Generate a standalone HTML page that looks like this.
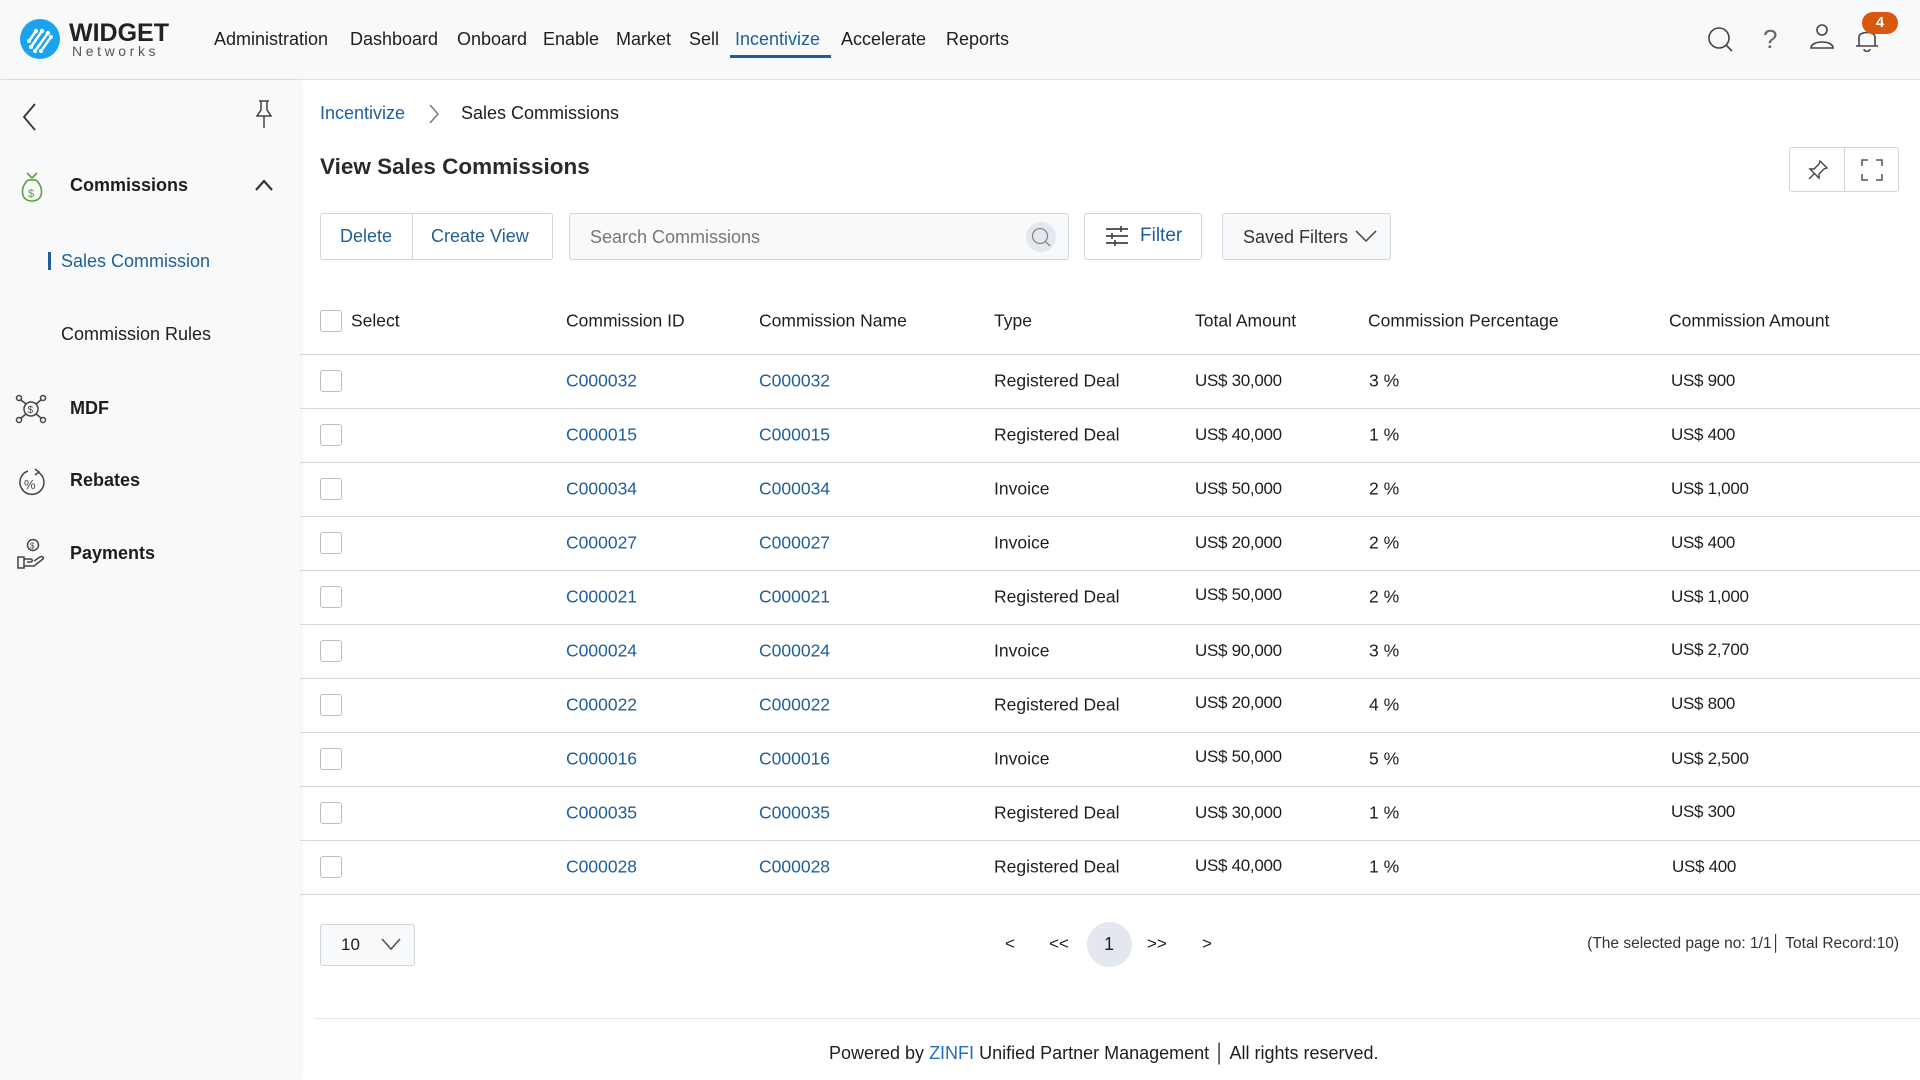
<!DOCTYPE html>
<html><head><meta charset="utf-8"><style>
*{margin:0;padding:0;box-sizing:border-box}
body{width:1920px;height:1080px;overflow:hidden;background:#fff;font-family:"Liberation Sans",sans-serif;color:#1e1e1e;position:relative}
.a{position:absolute;white-space:nowrap}
.hdr{position:absolute;left:0;top:0;width:1920px;height:80px;background:#f8f9fa;border-bottom:1px solid #dde3ea}
.nav{font-size:18px;top:29px;color:#1e1e1e}
.side{position:absolute;left:0;top:80px;width:300px;height:1000px;background:#f8f9fa;box-shadow:2px 0 4px rgba(0,0,0,.05)}
.link{color:#1f5f99}
.t{font-size:17.5px;transform:translateY(-50%)}
.line{position:absolute;left:300px;width:1620px;height:1px;background:#d3d9e2}
.cb{position:absolute;left:320px;width:22px;height:22px;border:1px solid #b8bec6;border-radius:3px;background:#fff;transform:translateY(-50%)}
.btn{position:absolute;border:1px solid #cfd6de;background:#fff;border-radius:3px}
.amt{letter-spacing:-0.3px;font-size:17px}
</style></head><body>
<div class="hdr"></div>
<svg class="a" style="left:20px;top:19px" width="40" height="40" viewBox="0 0 40 40"><circle cx="20" cy="20" r="20" fill="#1aa3ef"/><g stroke="#fff" stroke-width="2.5" stroke-linecap="round" fill="none"><path d="M9 22 L16 12 M11 28 L22 12 M15 32 L28 14 M21 32 L31 18"/></g><g fill="#fff"><circle cx="16" cy="12" r="2.2"/><circle cx="22" cy="12" r="2.2"/><circle cx="28" cy="14" r="2.2"/><circle cx="31" cy="18" r="2"/><circle cx="9" cy="22" r="2"/><circle cx="11" cy="28" r="2"/><circle cx="15" cy="32" r="2"/><circle cx="21" cy="32" r="2"/></g></svg>
<div class="a" style="left:69px;top:19px;font-size:25px;font-weight:bold;color:#222;letter-spacing:0px">WIDGET</div>
<div class="a" style="left:72px;top:43px;font-size:14px;color:#555;letter-spacing:3.6px">Networks</div>
<div class="a nav" style="left:214px">Administration</div>
<div class="a nav" style="left:350px">Dashboard</div>
<div class="a nav" style="left:457px">Onboard</div>
<div class="a nav" style="left:543px">Enable</div>
<div class="a nav" style="left:616px">Market</div>
<div class="a nav" style="left:689px">Sell</div>
<div class="a nav" style="left:735px;color:#1f5f99">Incentivize</div>
<div class="a" style="left:730px;top:55px;width:101px;height:3px;background:#1f5f99"></div>
<div class="a nav" style="left:841px">Accelerate</div>
<div class="a nav" style="left:946px">Reports</div>
<svg class="a" style="left:1707px;top:26px" width="28" height="28" viewBox="0 0 28 28" fill="none" stroke="#444" stroke-width="1.6"><circle cx="12" cy="12" r="10"/><path d="M19 19 L25 25"/></svg>
<div class="a" style="left:1763px;top:24px;font-size:26px;color:#666">?</div>
<svg class="a" style="left:1808px;top:22px" width="28" height="28" viewBox="0 0 28 28" fill="none" stroke="#444" stroke-width="1.6"><circle cx="14" cy="8" r="5"/><path d="M3 26 C3 18 25 18 25 26 Z"/></svg>
<svg class="a" style="left:1853px;top:24px" width="28" height="30" viewBox="0 0 28 30" fill="none" stroke="#444" stroke-width="1.6"><path d="M6 22 L6 13 C6 7 22 7 22 13 L22 22 Z M3 22 L25 22 M11 25 C11 28 17 28 17 25"/></svg>
<div class="a" style="left:1862px;top:12px;width:36px;height:22px;border-radius:11px;background:#d9580d;color:#fff;font-size:15px;font-weight:bold;text-align:center;line-height:22px">4</div>
<div class="side"></div>
<svg class="a" style="left:20px;top:102px" width="20" height="30" viewBox="0 0 20 30" fill="none" stroke="#333" stroke-width="1.8"><path d="M15 2 L4 15 L15 28"/></svg>
<svg class="a" style="left:254px;top:98px" width="20" height="32" viewBox="0 0 20 32" fill="none" stroke="#444" stroke-width="1.5"><path d="M5 3 H15 M7 3 V12 L3 18 H17 L13 12 V3 M10 18 V30"/></svg>
<svg class="a" style="left:18px;top:171px" width="28" height="32" viewBox="0 0 28 32" fill="none" stroke="#5aa13a" stroke-width="1.6"><path d="M9 2 L14 7 L19 2 M10 9 H18 M10 9 C2 16 2 30 14 30 C26 30 26 16 18 9"/><text x="10" y="26" font-size="11" fill="#5aa13a" stroke="none" font-family="Liberation Sans">$</text></svg>
<div class="a" style="left:70px;top:175px;font-size:18px;font-weight:bold;color:#1e1e1e">Commissions</div>
<svg class="a" style="left:254px;top:178px" width="20" height="14" viewBox="0 0 20 14" fill="none" stroke="#333" stroke-width="2.2"><path d="M2 12 L10 3 L18 12"/></svg>
<div class="a" style="left:48px;top:252px;width:3px;height:18px;background:#1f5f99"></div>
<div class="a" style="left:61px;top:251px;font-size:18px;color:#1f5f99">Sales Commission</div>
<div class="a" style="left:61px;top:324px;font-size:18px">Commission Rules</div>
<svg class="a" style="left:15px;top:394px" width="32" height="30" viewBox="0 0 32 30" fill="none" stroke="#444" stroke-width="1.5"><circle cx="16" cy="15" r="7"/><circle cx="4" cy="4" r="2.5"/><circle cx="28" cy="4" r="2.5"/><circle cx="4" cy="26" r="2.5"/><circle cx="28" cy="26" r="2.5"/><path d="M6 6 L11 10 M26 6 L21 10 M6 24 L11 20 M26 24 L21 20"/><text x="12.5" y="19" font-size="10" fill="#444" stroke="none">$</text></svg>
<div class="a" style="left:70px;top:398px;font-size:18px;font-weight:bold">MDF</div>
<svg class="a" style="left:16px;top:466px" width="30" height="32" viewBox="0 0 30 32" fill="none" stroke="#444" stroke-width="1.5"><path d="M22 6 A12 12 0 1 1 12 5 M19 3 L23 6 L19 9"/><text x="8" y="23" font-size="13" fill="#444" stroke="none">%</text></svg>
<div class="a" style="left:70px;top:470px;font-size:18px;font-weight:bold">Rebates</div>
<svg class="a" style="left:16px;top:538px" width="30" height="32" viewBox="0 0 30 32" fill="none" stroke="#444" stroke-width="1.5"><circle cx="17" cy="7" r="5.5"/><path d="M2 19 H8 V30 H2 Z M8 21 H14 C17 21 17 24 14 24 H11 M8 28 H18 L27 21 C28 19 26 18 24 19 L18 23"/><text x="14" y="10.5" font-size="8" fill="#444" stroke="none">$</text></svg>
<div class="a" style="left:70px;top:543px;font-size:18px;font-weight:bold">Payments</div>
<div class="a link" style="left:320px;top:103px;font-size:18px">Incentivize</div>
<svg class="a" style="left:428px;top:104px" width="12" height="20" viewBox="0 0 12 20" fill="none" stroke="#777" stroke-width="1.4"><path d="M2 1 L10 10 L2 19"/></svg>
<div class="a" style="left:461px;top:103px;font-size:18px">Sales Commissions</div>
<div class="a" style="left:320px;top:154px;font-size:22.5px;font-weight:bold;color:#2a2a2a">View Sales Commissions</div>
<div class="btn" style="left:1789px;top:147px;width:110px;height:45px"></div>
<div class="a" style="left:1844px;top:148px;width:1px;height:43px;background:#cfd6de"></div>
<svg class="a" style="left:1806px;top:158px" width="24" height="24" viewBox="0 0 24 24" fill="none" stroke="#444" stroke-width="1.4"><path d="M14 3 L21 10 L18 11 L13 16 L13 20 L4 11 L8 11 L13 6 Z M8 16 L3 21"/></svg>
<svg class="a" style="left:1861px;top:159px" width="22" height="22" viewBox="0 0 22 22" fill="none" stroke="#555" stroke-width="1.5"><path d="M1 7 V1 H7 M15 1 H21 V7 M21 15 V21 H15 M7 21 H1 V15"/></svg>
<div class="btn" style="left:320px;top:213px;width:233px;height:47px"></div>
<div class="a" style="left:412px;top:214px;width:1px;height:45px;background:#cfd6de"></div>
<div class="a link" style="left:340px;top:226px;font-size:18px">Delete</div>
<div class="a link" style="left:431px;top:226px;font-size:18px">Create View</div>
<div class="btn" style="left:569px;top:213px;width:500px;height:47px;background:#f8f9fa"></div>
<div class="a" style="left:590px;top:227px;font-size:18px;color:#777">Search Commissions</div>
<div class="a" style="left:1026px;top:222px;width:30px;height:30px;border-radius:50%;background:#e3e8ee"></div>
<svg class="a" style="left:1030px;top:226px" width="22" height="22" viewBox="0 0 22 22" fill="none" stroke="#888" stroke-width="1.3"><circle cx="10" cy="10" r="7.5"/><path d="M15.5 15.5 L20 20"/></svg>
<div class="btn" style="left:1084px;top:213px;width:118px;height:47px"></div>
<svg class="a" style="left:1105px;top:225px" width="24" height="22" viewBox="0 0 24 22" fill="none" stroke="#444" stroke-width="1.7"><path d="M1 4 H23 M1 11 H23 M1 18 H23 M16 1 V7 M7 8 V14 M10 15 V21"/></svg>
<div class="a link" style="left:1140px;top:225px;font-size:19px">Filter</div>
<div class="btn" style="left:1222px;top:213px;width:169px;height:47px;background:#f8f9fa"></div>
<div class="a" style="left:1243px;top:227px;font-size:18px;color:#333">Saved Filters</div>
<svg class="a" style="left:1355px;top:229px" width="22" height="14" viewBox="0 0 22 14" fill="none" stroke="#555" stroke-width="1.6"><path d="M1 2 L11 12 L21 2"/></svg>
<div class="cb" style="top:321px"></div>
<div class="a t" style="left:351px;top:321px">Select</div>
<div class="a t" style="left:566px;top:321px">Commission ID</div>
<div class="a t" style="left:759px;top:321px">Commission Name</div>
<div class="a t" style="left:994px;top:321px">Type</div>
<div class="a t" style="left:1195px;top:321px">Total Amount</div>
<div class="a t" style="left:1368px;top:321px">Commission Percentage</div>
<div class="a t" style="left:1669px;top:321px">Commission Amount</div>
<div class="line" style="top:354px"></div>
<div class="cb" style="top:381px"></div><div class="a t link" style="left:566px;top:381px">C000032</div><div class="a t link" style="left:759px;top:381px">C000032</div><div class="a t" style="left:994px;top:381px">Registered Deal</div><div class="a t amt" style="left:1195px;top:381px">US$ 30,000</div><div class="a t" style="left:1369px;top:381px">3 %</div><div class="a t amt" style="left:1671px;top:381px">US$ 900</div><div class="line" style="top:408px"></div>
<div class="cb" style="top:435px"></div><div class="a t link" style="left:566px;top:435px">C000015</div><div class="a t link" style="left:759px;top:435px">C000015</div><div class="a t" style="left:994px;top:435px">Registered Deal</div><div class="a t amt" style="left:1195px;top:435px">US$ 40,000</div><div class="a t" style="left:1369px;top:435px">1 %</div><div class="a t amt" style="left:1671px;top:435px">US$ 400</div><div class="line" style="top:462px"></div>
<div class="cb" style="top:489px"></div><div class="a t link" style="left:566px;top:489px">C000034</div><div class="a t link" style="left:759px;top:489px">C000034</div><div class="a t" style="left:994px;top:489px">Invoice</div><div class="a t amt" style="left:1195px;top:489px">US$ 50,000</div><div class="a t" style="left:1369px;top:489px">2 %</div><div class="a t amt" style="left:1671px;top:489px">US$ 1,000</div><div class="line" style="top:516px"></div>
<div class="cb" style="top:543px"></div><div class="a t link" style="left:566px;top:543px">C000027</div><div class="a t link" style="left:759px;top:543px">C000027</div><div class="a t" style="left:994px;top:543px">Invoice</div><div class="a t amt" style="left:1195px;top:543px">US$ 20,000</div><div class="a t" style="left:1369px;top:543px">2 %</div><div class="a t amt" style="left:1671px;top:543px">US$ 400</div><div class="line" style="top:570px"></div>
<div class="cb" style="top:597px"></div><div class="a t link" style="left:566px;top:597px">C000021</div><div class="a t link" style="left:759px;top:597px">C000021</div><div class="a t" style="left:994px;top:597px">Registered Deal</div><div class="a t amt" style="left:1195px;top:595px">US$ 50,000</div><div class="a t" style="left:1369px;top:597px">2 %</div><div class="a t amt" style="left:1671px;top:597px">US$ 1,000</div><div class="line" style="top:624px"></div>
<div class="cb" style="top:651px"></div><div class="a t link" style="left:566px;top:651px">C000024</div><div class="a t link" style="left:759px;top:651px">C000024</div><div class="a t" style="left:994px;top:651px">Invoice</div><div class="a t amt" style="left:1195px;top:651px">US$ 90,000</div><div class="a t" style="left:1369px;top:651px">3 %</div><div class="a t amt" style="left:1671px;top:650px">US$ 2,700</div><div class="line" style="top:678px"></div>
<div class="cb" style="top:705px"></div><div class="a t link" style="left:566px;top:705px">C000022</div><div class="a t link" style="left:759px;top:705px">C000022</div><div class="a t" style="left:994px;top:705px">Registered Deal</div><div class="a t amt" style="left:1195px;top:703px">US$ 20,000</div><div class="a t" style="left:1369px;top:705px">4 %</div><div class="a t amt" style="left:1671px;top:704px">US$ 800</div><div class="line" style="top:732px"></div>
<div class="cb" style="top:759px"></div><div class="a t link" style="left:566px;top:759px">C000016</div><div class="a t link" style="left:759px;top:759px">C000016</div><div class="a t" style="left:994px;top:759px">Invoice</div><div class="a t amt" style="left:1195px;top:757px">US$ 50,000</div><div class="a t" style="left:1369px;top:759px">5 %</div><div class="a t amt" style="left:1671px;top:759px">US$ 2,500</div><div class="line" style="top:786px"></div>
<div class="cb" style="top:813px"></div><div class="a t link" style="left:566px;top:813px">C000035</div><div class="a t link" style="left:759px;top:813px">C000035</div><div class="a t" style="left:994px;top:813px">Registered Deal</div><div class="a t amt" style="left:1195px;top:813px">US$ 30,000</div><div class="a t" style="left:1369px;top:813px">1 %</div><div class="a t amt" style="left:1671px;top:812px">US$ 300</div><div class="line" style="top:840px"></div>
<div class="cb" style="top:867px"></div><div class="a t link" style="left:566px;top:867px">C000028</div><div class="a t link" style="left:759px;top:867px">C000028</div><div class="a t" style="left:994px;top:867px">Registered Deal</div><div class="a t amt" style="left:1195px;top:866px">US$ 40,000</div><div class="a t" style="left:1369px;top:867px">1 %</div><div class="a t amt" style="left:1672px;top:867px">US$ 400</div><div class="line" style="top:894px"></div>
<div class="btn" style="left:320px;top:924px;width:95px;height:42px;background:#f8f9fa"></div>
<div class="a" style="left:341px;top:935px;font-size:17px">10</div>
<svg class="a" style="left:381px;top:938px" width="20" height="13" viewBox="0 0 20 13" fill="none" stroke="#555" stroke-width="1.6"><path d="M1 1 L10 11 L19 1"/></svg>
<div class="a" style="left:1005px;top:934px;font-size:17px">&lt;</div>
<div class="a" style="left:1049px;top:934px;font-size:17px">&lt;&lt;</div>
<div class="a" style="left:1087px;top:922px;width:45px;height:45px;border-radius:50%;background:#e3e8ee"></div>
<div class="a" style="left:1104px;top:934px;font-size:18px">1</div>
<div class="a" style="left:1147px;top:934px;font-size:17px">&gt;&gt;</div>
<div class="a" style="left:1202px;top:934px;font-size:17px">&gt;</div>
<div class="a" style="right:21px;top:935px;font-size:15.5px;color:#333">(The selected page no: 1/1│ Total Record:10)</div>
<div class="a" style="left:314px;top:1018px;width:1606px;height:1px;background:#e6e8eb"></div>
<div class="a" style="left:829px;top:1043px;font-size:18px">Powered by <span class="link" style="color:#1f6fc0">ZINFI</span> Unified Partner Management │ All rights reserved.</div>
</body></html>
